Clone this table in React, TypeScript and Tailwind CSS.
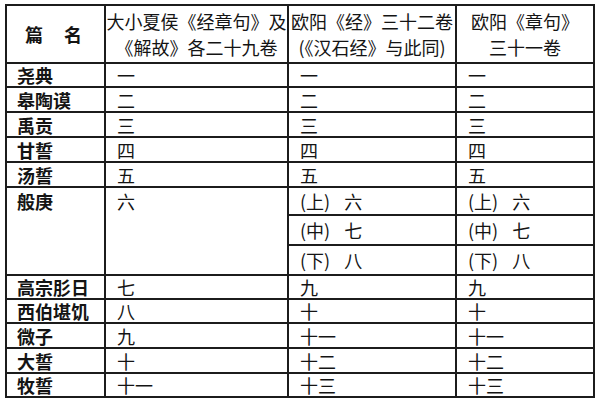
const rows: [string, string, string, string][] = [
  ["尧典", "一", "一", "一"],
  ["皋陶谟", "二", "二", "二"],
  ["禹贡", "三", "三", "三"],
  ["甘誓", "四", "四", "四"],
  ["汤誓", "五", "五", "五"],
];

const rowsAfter: [string, string, string, string][] = [
  ["高宗肜日", "七", "九", "九"],
  ["西伯堪饥", "八", "十", "十"],
  ["微子", "九", "十一", "十一"],
  ["大誓", "十", "十二", "十二"],
  ["牧誓", "十一", "十三", "十三"],
];

const parts = [
  ["上", "六"],
  ["中", "七"],
  ["下", "八"],
];

function Row({ r }: { r: [string, string, string, string] }) {
  return (
    <>
      <div className="bg-white flex items-center pl-[10px] font-bold whitespace-nowrap">{r[0]}</div>
      <div className="bg-white flex items-center pl-[11px]">{r[1]}</div>
      <div className="bg-white flex items-center pl-[11px]">{r[2]}</div>
      <div className="bg-white flex items-center pl-[11px]">{r[3]}</div>
    </>
  );
}

export default function App() {
  return (
    <div className="w-[600px] h-[401px] bg-white pl-[5px] pt-[4px] text-[#141414] text-[18px] leading-none" style={{ fontFamily: '"Noto Sans CJK SC", "Noto Sans", sans-serif' }}>
      <div className="w-[590px] grid grid-cols-[97px_181px_166px_136px] grid-rows-[56px_22px_23px_23px_23px_23px_26px_28px_28px_22px_22px_23px_23px_22px] gap-[2px] p-[2px] bg-[#1c1c1c]">
        {/* header */}
        <div className="bg-white flex items-center justify-center gap-[21px] pr-[4px] font-bold">
          <span>篇</span>
          <span>名</span>
        </div>
        <div className="bg-white flex flex-col items-center justify-center leading-[26px] whitespace-nowrap">
          <span>大小夏侯《经章句》及</span>
          <span>《解故》各二十九卷</span>
        </div>
        <div className="bg-white flex flex-col items-center justify-center leading-[26px] whitespace-nowrap">
          <span>欧阳《经》三十二卷</span>
          <span>(《汉石经》与此同)</span>
        </div>
        <div className="bg-white flex flex-col items-center justify-center leading-[26px] whitespace-nowrap">
          <span>欧阳《章句》</span>
          <span>三十一卷</span>
        </div>

        {rows.map((r) => (
          <Row key={r[0]} r={r} />
        ))}

        {/* 般庚 spans three sub-rows */}
        <div className="row-span-3 bg-white">
          <div className="h-[26px] flex items-center pl-[10px] font-bold">般庚</div>
        </div>
        <div className="row-span-3 bg-white">
          <div className="h-[26px] flex items-center pl-[11px]">六</div>
        </div>
        {parts.map(([p, n]) => (
          <>
            <div key={p + "a"} className="bg-white flex items-center pl-[11px]">
              <span>({p})</span>
              <span className="ml-[14px]">{n}</span>
            </div>
            <div key={p + "b"} className="bg-white flex items-center pl-[11px]">
              <span>({p})</span>
              <span className="ml-[14px]">{n}</span>
            </div>
          </>
        ))}

        {rowsAfter.map((r) => (
          <Row key={r[0]} r={r} />
        ))}
      </div>
    </div>
  );
}
